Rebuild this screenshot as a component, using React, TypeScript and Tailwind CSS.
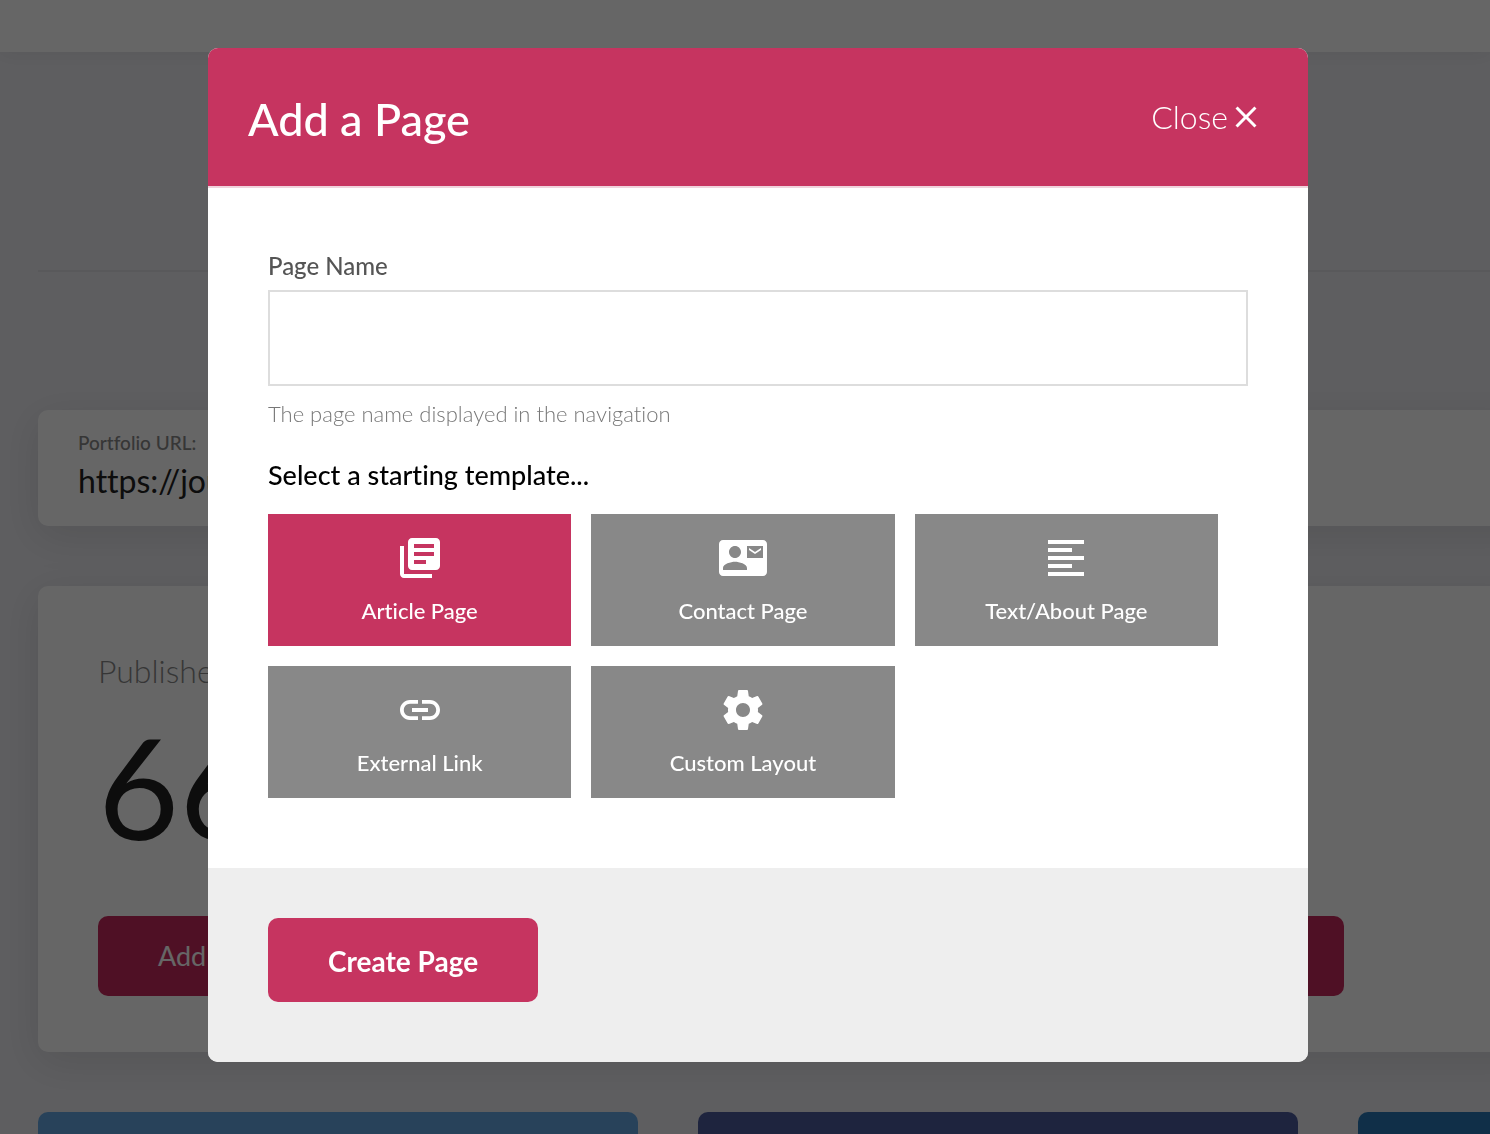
import { useState } from "react";
import type { ReactNode } from "react";
import {
  MdClose,
  MdContactMail,
  MdFormatAlignLeft,
  MdLibraryBooks,
  MdLink,
} from "react-icons/md";
import clsx from "clsx";

type Template = { id: string; label: string; icon: ReactNode };

function CogIcon() {
  return (
    <svg width="48" height="48" viewBox="0 0 24 24" fill="currentColor">
      <path d="M19.43 12.98c.04-.32.07-.64.07-.98s-.03-.66-.07-.98l2.11-1.65c.19-.15.24-.42.12-.64l-2-3.46c-.12-.22-.39-.3-.61-.22l-2.49 1c-.52-.4-1.08-.73-1.69-.98l-.38-2.65C14.46 2.18 14.25 2 14 2h-4c-.25 0-.46.18-.49.42l-.38 2.65c-.61.25-1.17.59-1.69.98l-2.49-1c-.23-.09-.49 0-.61.22l-2 3.46c-.13.22-.07.49.12.64l2.11 1.65c-.04.32-.07.65-.07.98s.03.66.07.98l-2.11 1.65c-.19.15-.24.42-.12.64l2 3.46c.12.22.39.3.61.22l2.49-1c.52.4 1.08.73 1.69.98l.38 2.65c.03.24.24.42.49.42h4c.25 0 .46-.18.49-.42l.38-2.65c.61-.25 1.17-.59 1.69-.98l2.49 1c.23.09.49 0 .61-.22l2-3.46c.12-.22.07-.49-.12-.64l-2.11-1.65zM12 15.5c-1.93 0-3.5-1.57-3.5-3.5s1.57-3.5 3.5-3.5 3.5 1.57 3.5 3.5-1.57 3.5-3.5 3.5z" />
    </svg>
  );
}

const TEMPLATES: Template[] = [
  { id: "article", label: "Article Page", icon: <MdLibraryBooks size={48} /> },
  { id: "contact", label: "Contact Page", icon: <MdContactMail size={48} /> },
  { id: "text", label: "Text/About Page", icon: <MdFormatAlignLeft size={48} /> },
  { id: "link", label: "External Link", icon: <MdLink size={48} /> },
  { id: "custom", label: "Custom Layout", icon: <CogIcon /> },
];

function Dashboard() {
  return (
    <div className="h-full overflow-hidden bg-[#ebebf0]" aria-hidden="true">
      <header className="h-13 bg-white shadow-[0_2px_20px_rgba(0,0,0,0.06)]" />

      <main className="pl-[38px]">
        <div className="h-[220px] border-b-2 border-[#dfdfe3]" />

        <section className="mt-[138px] -mr-10 h-[116px] rounded-[10px] bg-white px-10 pt-5 shadow-[0_10px_40px_rgba(0,0,0,0.1)]">
          <div className="text-[19px] leading-[26px] font-medium text-[#888]">
            Portfolio URL:
          </div>
          <div className="text-[32px] leading-[50px] text-[#222]">
            https://journal
          </div>
        </section>

        <section className="mt-[60px] -mr-10 flex h-[466px] items-start justify-between rounded-[10px] bg-white pt-[60px] pr-[186px] pl-[60px] shadow-[0_10px_40px_rgba(0,0,0,0.1)]">
          <div>
            <div className="text-[32px] leading-[50px] font-light text-[#888]">
              Published
            </div>
            <div className="h-[220px] text-[140px] leading-[180px] text-[#222]">
              66
            </div>
            <button
              type="button"
              className="h-20 w-[270px] rounded-[10px] bg-[#c62a5c] pl-[60px] text-left text-[27px] text-white"
            >
              Add
            </button>
          </div>
          <button
            type="button"
            className="mt-[270px] h-20 w-[270px] rounded-[10px] bg-[#c62a5c] text-[27px] text-white"
          >
            Add
          </button>
        </section>

        <div className="mt-[60px] flex gap-[60px]">
          <div className="h-40 w-[600px] shrink-0 rounded-[10px] bg-[#64a5e1]" />
          <div className="h-40 w-[600px] shrink-0 rounded-[10px] bg-[#4b5a9b]" />
          <div className="h-40 w-[600px] shrink-0 rounded-[10px] bg-[#2876b4]" />
        </div>
      </main>
    </div>
  );
}

function AddPageDialog() {
  const [name, setName] = useState("");
  const [template, setTemplate] = useState("article");

  return (
    <form
      role="dialog"
      aria-labelledby="dialog-title"
      onSubmit={(event) => event.preventDefault()}
      className="overflow-hidden rounded-[10px] bg-white"
    >
      <header className="flex h-[140px] items-center justify-between border-b-2 border-[#efd3dc] bg-[#c63460] pr-11 pl-10 text-white">
        <h1 id="dialog-title" className="pt-1 text-[45px] leading-[60px] font-medium">
          Add a Page
        </h1>
        <button
          type="button"
          className="flex items-center text-[32px] leading-10 font-light"
        >
          Close
          <MdClose size={36} />
        </button>
      </header>

      <div className="px-[60px] pt-[60px] pb-[70px]">
        <label
          htmlFor="page-name"
          className="block text-[24px] leading-9 font-medium text-[#555]"
        >
          Page Name
        </label>
        <input
          id="page-name"
          value={name}
          onChange={(event) => setName(event.target.value)}
          className="mt-[6px] block h-24 w-full border-2 border-[#ddd] px-5 text-[24px] outline-none"
        />
        <p className="mt-[10px] text-[22px] leading-9 font-light text-[#777]">
          The page name displayed in the navigation
        </p>

        <h2 className="mt-6 text-[27px] leading-[38px] font-medium text-black">
          Select a starting template...
        </h2>
        <div className="mt-5 grid grid-cols-3 gap-5 pr-[30px]">
          {TEMPLATES.map((item) => (
            <button
              key={item.id}
              type="button"
              aria-pressed={template === item.id}
              onClick={() => setTemplate(item.id)}
              className={clsx(
                "flex h-[132px] flex-col items-center pt-5 text-[22px] leading-[30px] font-medium text-white",
                template === item.id ? "bg-[#c63460]" : "bg-[#888]",
              )}
            >
              {item.icon}
              <span className="mt-[14px]">{item.label}</span>
            </button>
          ))}
        </div>
      </div>

      <footer className="bg-[#eee] px-[60px] pt-[50px] pb-[60px]">
        <button
          type="submit"
          className="h-[84px] rounded-[10px] bg-[#c63460] px-[60px] pt-[2px] text-[28px] leading-9 font-bold text-white"
        >
          Create Page
        </button>
      </footer>
    </form>
  );
}

export default function App() {
  return (
    <div className="relative h-screen overflow-hidden font-['Lato','Open_Sans',sans-serif] [font-variant-ligatures:none]">
      <Dashboard />
      <div className="fixed inset-0 overflow-y-auto bg-black/60 pt-12 pr-[182px] pb-12 pl-[208px]">
        <AddPageDialog />
      </div>
    </div>
  );
}
